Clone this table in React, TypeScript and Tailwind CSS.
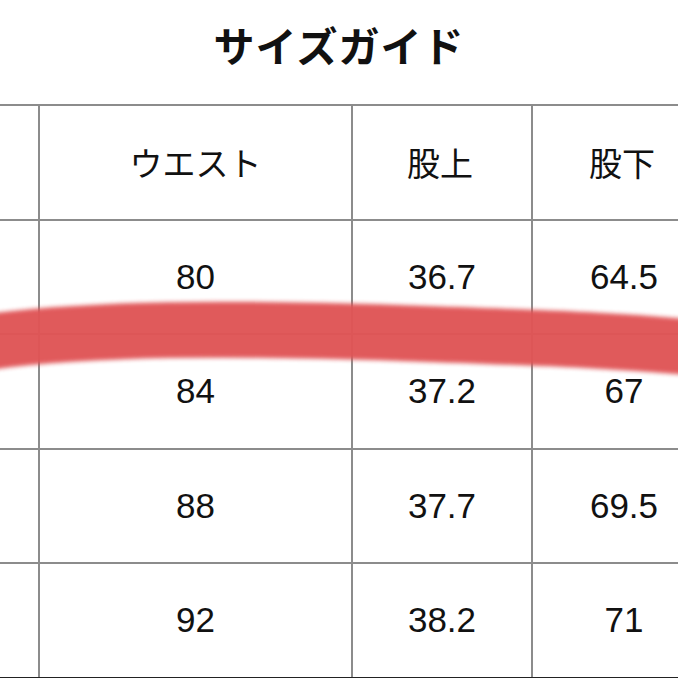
const rows = [
  { h: "h-[114px]", cells: ["80", "36.7", "64.5"] },
  { h: "h-[115px]", cells: ["84", "37.2", "67"] },
  { h: "h-[114px]", cells: ["88", "37.7", "69.5"] },
  { h: "h-[115px]", cells: ["92", "38.2", "71"] },
];

const jp = "font-['Noto_Sans_CJK_JP','Noto_Sans',sans-serif]";
const num = "font-['Liberation_Sans',Arial,sans-serif]";

const App = () => {
  return (
    <div className="relative w-[678px] h-[678px] overflow-hidden bg-white text-[#111]">
      {/* Title */}
      <div className="h-[104px] flex items-center justify-center pb-[16px]">
        <h1 className={`${jp} text-[41px] font-bold tracking-[1px] leading-none`}>
          サイズガイド
        </h1>
      </div>

      {/* Table */}
      <div className="w-[720px] border-b-2 border-[#222]">
        <div className="grid grid-cols-[40px_313px_180px_187px] h-[115px] border-t-2 border-[#8c8c8c]">
          <div className="border-r-2 border-[#8c8c8c]" />
          <div className={`${jp} border-r-2 border-[#8c8c8c] flex items-center justify-center text-[33px]`}>
            ウエスト
          </div>
          <div className={`${jp} border-r-2 border-[#8c8c8c] flex items-center justify-center text-[33px] pr-[4px]`}>
            股上
          </div>
          <div className={`${jp} flex items-center justify-start pl-[56px] text-[33px]`}>
            股下
          </div>
        </div>
        {rows.map((row) => (
          <div
            key={row.cells[0]}
            className={`grid grid-cols-[40px_313px_180px_187px] ${row.h} border-t-2 border-[#8c8c8c]`}
          >
            <div className="border-r-2 border-[#8c8c8c]" />
            <div className={`${num} border-r-2 border-[#8c8c8c] flex items-center justify-center text-[35px]`}>
              {row.cells[0]}
            </div>
            <div className={`${num} border-r-2 border-[#8c8c8c] flex items-center justify-center text-[35px]`}>
              {row.cells[1]}
            </div>
            <div className={`${num} flex items-center pl-[55px] text-[35px]`}>
              <span className="w-[72px] text-center">{row.cells[2]}</span>
            </div>
          </div>
        ))}
      </div>

      {/* Red marker stroke */}
      <svg
        className="absolute left-0 top-0 pointer-events-none"
        width="678"
        height="678"
        viewBox="0 0 678 678"
      >
        <defs>
          <filter
            id="soft"
            filterUnits="userSpaceOnUse"
            x="-60"
            y="220"
            width="820"
            height="240"
          >
            <feGaussianBlur stdDeviation="2.2" />
          </filter>
        </defs>
        <path
          d="M -40 346 C 80 326, 250 328, 400 333 S 620 340, 720 350"
          fill="none"
          stroke="#e05557"
          strokeWidth="56"
          strokeLinecap="round"
          filter="url(#soft)"
          opacity="0.97"
        />
      </svg>
    </div>
  );
};

export default App;
